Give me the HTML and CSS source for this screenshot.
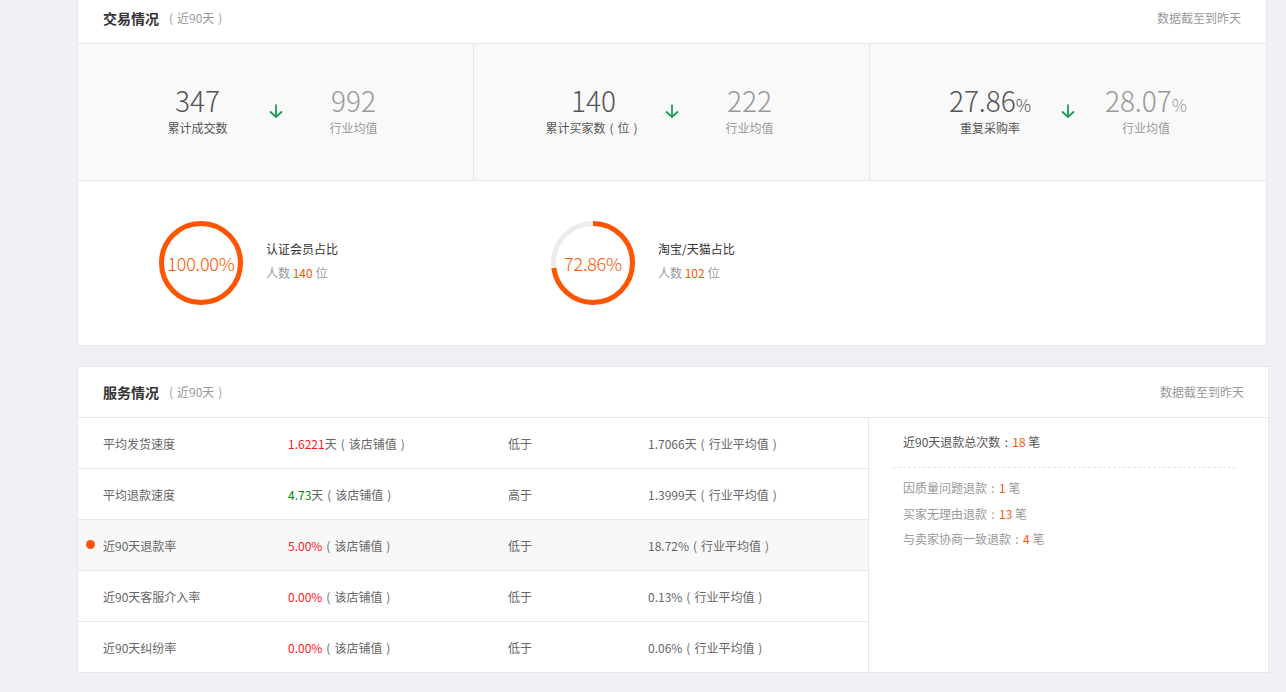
FILE: index.html
```html
<!DOCTYPE html>
<html lang="zh-CN">
<head>
<meta charset="utf-8">
<title>交易情况</title>
<link rel="stylesheet" href="styles.css">
</head>
<body>
<div class="page">
  <section class="card card-trade">
    <div class="card-head">
      <div class="head-title"><span class="title">交易情况</span><span class="sub"><span class="p">(</span>近90天<span class="p">)</span></span></div>
      <div class="head-note">数据截至到昨天</div>
    </div>
    <div class="stats">
      <div class="stat">
        <div class="stat-block">
          <div class="num main">347</div>
          <div class="lbl main">累计成交数</div>
        </div>
        <div class="arrow"><svg width="16" height="16" viewBox="0 0 16 16"><path d="M8 1.5V14M2 8.5l6 5.5 6-5.5" fill="none" stroke="#1f9a5c" stroke-width="1.8"/></svg></div>
        <div class="stat-block">
          <div class="num ind">992</div>
          <div class="lbl ind">行业均值</div>
        </div>
      </div>
      <div class="stat">
        <div class="stat-block">
          <div class="num main">140</div>
          <div class="lbl main">累计买家数<span class="p">(</span>位<span class="p">)</span></div>
        </div>
        <div class="arrow"><svg width="16" height="16" viewBox="0 0 16 16"><path d="M8 1.5V14M2 8.5l6 5.5 6-5.5" fill="none" stroke="#1f9a5c" stroke-width="1.8"/></svg></div>
        <div class="stat-block">
          <div class="num ind">222</div>
          <div class="lbl ind">行业均值</div>
        </div>
      </div>
      <div class="stat">
        <div class="stat-block">
          <div class="num main">27.86<small>%</small></div>
          <div class="lbl main">重复采购率</div>
        </div>
        <div class="arrow"><svg width="16" height="16" viewBox="0 0 16 16"><path d="M8 1.5V14M2 8.5l6 5.5 6-5.5" fill="none" stroke="#1f9a5c" stroke-width="1.8"/></svg></div>
        <div class="stat-block">
          <div class="num ind">28.07<small>%</small></div>
          <div class="lbl ind">行业均值</div>
        </div>
      </div>
    </div>
    <div class="rings">
      <div class="ring-item">
        <div class="ring">
          <svg width="84" height="84" viewBox="0 0 84 84">
            <circle cx="42" cy="42" r="39.5" fill="none" stroke="#ececec" stroke-width="5"/>
            <circle cx="42" cy="42" r="39.5" fill="none" stroke="#ff5500" stroke-width="5" stroke-dasharray="248.19 248.19" transform="rotate(-90 42 42)"/>
          </svg>
          <span class="ring-text">100.00%</span>
        </div>
        <div class="ring-info">
          <div class="ring-title">认证会员占比</div>
          <div class="ring-sub">人数 <em>140</em> 位</div>
        </div>
      </div>
      <div class="ring-item">
        <div class="ring">
          <svg width="84" height="84" viewBox="0 0 84 84">
            <circle cx="42" cy="42" r="39.5" fill="none" stroke="#ececec" stroke-width="5"/>
            <circle cx="42" cy="42" r="39.5" fill="none" stroke="#ff5500" stroke-width="5" stroke-dasharray="180.83 248.19" transform="rotate(-90 42 42)"/>
          </svg>
          <span class="ring-text">72.86%</span>
        </div>
        <div class="ring-info">
          <div class="ring-title">淘宝/天猫占比</div>
          <div class="ring-sub">人数 <em>102</em> 位</div>
        </div>
      </div>
    </div>
  </section>

  <section class="card card-service">
    <div class="card-head">
      <div class="head-title"><span class="title">服务情况</span><span class="sub"><span class="p">(</span>近90天<span class="p">)</span></span></div>
      <div class="head-note">数据截至到昨天</div>
    </div>
    <div class="service-body">
      <div class="table">
        <div class="row">
          <div class="c-label">平均发货速度</div>
          <div class="c-val"><span class="red">1.6221</span>天<span class="p">(</span>该店铺值<span class="p">)</span></div>
          <div class="c-cmp">低于</div>
          <div class="c-ind">1.7066天<span class="p">(</span>行业平均值<span class="p">)</span></div>
        </div>
        <div class="row">
          <div class="c-label">平均退款速度</div>
          <div class="c-val"><span class="green">4.73</span>天<span class="p">(</span>该店铺值<span class="p">)</span></div>
          <div class="c-cmp">高于</div>
          <div class="c-ind">1.3999天<span class="p">(</span>行业平均值<span class="p">)</span></div>
        </div>
        <div class="row active">
          <div class="c-label">近90天退款率</div>
          <div class="c-val"><span class="red">5.00%</span><span class="p">(</span>该店铺值<span class="p">)</span></div>
          <div class="c-cmp">低于</div>
          <div class="c-ind">18.72%<span class="p">(</span>行业平均值<span class="p">)</span></div>
        </div>
        <div class="row">
          <div class="c-label">近90天客服介入率</div>
          <div class="c-val"><span class="red">0.00%</span><span class="p">(</span>该店铺值<span class="p">)</span></div>
          <div class="c-cmp">低于</div>
          <div class="c-ind">0.13%<span class="p">(</span>行业平均值<span class="p">)</span></div>
        </div>
        <div class="row">
          <div class="c-label">近90天纠纷率</div>
          <div class="c-val"><span class="red">0.00%</span><span class="p">(</span>该店铺值<span class="p">)</span></div>
          <div class="c-cmp">低于</div>
          <div class="c-ind">0.06%<span class="p">(</span>行业平均值<span class="p">)</span></div>
        </div>
      </div>
      <div class="refund">
        <div class="refund-total">近90天退款总次数<span class="p">:</span><em>18</em> 笔</div>
        <div class="refund-list">
          <div class="refund-item">因质量问题退款<span class="p">:</span><em>1</em> 笔</div>
          <div class="refund-item">买家无理由退款<span class="p">:</span><em>13</em> 笔</div>
          <div class="refund-item">与卖家协商一致退款<span class="p">:</span><em>4</em> 笔</div>
        </div>
      </div>
    </div>
  </section>
</div>
</body>
</html>
```

FILE: styles.css
```css
* { box-sizing: border-box; }
html, body { margin: 0; padding: 0; }
body {
  background: #f0f1f5;
  font-family: "Noto Sans CJK SC", "Noto Sans", sans-serif;
  font-size: 12px;
  color: #666;
  overflow: hidden;
}
.page {
  margin-top: -8px;
  padding-left: 77px;
  display: flex;
  flex-direction: column;
  gap: 20px;
}
.card {
  background: #fff;
  border: 1px solid #e6e6e6;
}
.card-trade { width: 1190px; }
.card-service { width: 1192px; }
.card-head {
  height: 51px;
  border-bottom: 1px solid #e8e8e8;
  display: flex;
  align-items: center;
  justify-content: space-between;
  padding: 0 25px 1px 25px;
}
.card-service .card-head { padding-right: 24px; }
.head-title { display: flex; align-items: center; }
.title { font-size: 14px; font-weight: bold; color: #333; }
.sub { font-size: 12px; color: #999; margin-left: 6px; }
.head-note { color: #999; font-size: 12px; }
.p {
  display: inline-block;
  width: 1em;
  text-align: center;
}

.stats {
  display: grid;
  grid-template-columns: repeat(3, 1fr);
  height: 137px;
  background: #f9f9f9;
  border-bottom: 1px solid #e8e8e8;
}
.stat {
  display: flex;
  align-items: center;
  justify-content: center;
  border-right: 1px solid #e8e8e8;
  padding-bottom: 2px;
}
.stat:last-child { border-right: none; }
.stat-block {
  width: 120px;
  text-align: center;
}
.num {
  font-size: 28px;
  line-height: 30px;
  height: 30px;
  font-weight: 300;
}
.num small { font-size: 17px; line-height: 0; }
.num.main { color: #555; }
.num.ind { color: #999; }
.lbl { line-height: 18px; margin-top: 4px; }
.lbl.main { color: #555; }
.lbl.ind { color: #999; }
.arrow {
  width: 36px;
  display: flex;
  justify-content: center;
}
.arrow svg { display: block; }

.rings {
  height: 164px;
  display: flex;
  align-items: center;
  padding-left: 81px;
}
.ring-item {
  width: 392px;
  display: flex;
  align-items: center;
}
.ring {
  position: relative;
  width: 84px;
  height: 84px;
  flex: none;
}
.ring svg { display: block; }
.ring-text {
  position: absolute;
  inset: 0;
  display: flex;
  align-items: center;
  justify-content: center;
  font-size: 18px;
  font-weight: 300;
  color: #ff5500;
  letter-spacing: -0.2px;
}
.ring-info {
  margin-left: 23px;
  margin-bottom: 4px;
}
.ring-title { color: #333; line-height: 24px; }
.ring-sub { color: #999; line-height: 24px; }
em { font-style: normal; color: #ff5500; }

.service-body {
  display: flex;
}
.table {
  width: 791px;
  border-right: 1px solid #e8e8e8;
}
.row {
  position: relative;
  height: 51px;
  border-bottom: 1px solid #e8e8e8;
  display: flex;
  align-items: center;
  padding-left: 25px;
  color: #666;
}
.row:last-child { border-bottom: none; height: 50px; }
.row.active { background: #f8f8f8; }
.row.active::before {
  content: "";
  position: absolute;
  left: 8px;
  top: 50%;
  width: 9px;
  height: 9px;
  margin-top: -5px;
  border-radius: 50%;
  background: #ff5500;
}
.c-label { width: 185px; }
.c-val { width: 220px; }
.c-cmp { width: 140px; }
.c-ind { flex: 1; }
.red { color: #ff1a1a; }
.green { color: #008a00; }

.refund {
  flex: 1;
  padding: 12px 32px 0 24px;
}
.refund-total {
  padding-left: 10px;
  line-height: 24px;
  color: #555;
  padding-bottom: 13px;
  border-bottom: 1px dashed #e6e6e6;
}
.refund-list { padding-top: 7px; }
.refund-item {
  padding-left: 10px;
  line-height: 25.5px;
  color: #999;
}
```
